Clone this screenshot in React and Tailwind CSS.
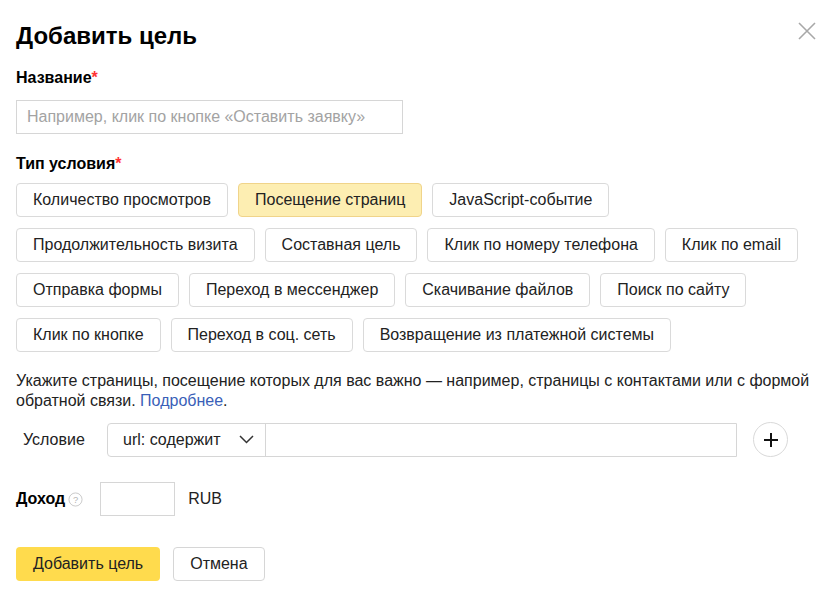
const rows = [
  ["Количество просмотров", "Посещение страниц", "JavaScript-событие"],
  ["Продолжительность визита", "Составная цель", "Клик по номеру телефона", "Клик по email"],
  ["Отправка формы", "Переход в мессенджер", "Скачивание файлов", "Поиск по сайту"],
  ["Клик по кнопке", "Переход в соц. сеть", "Возвращение из платежной системы"],
];

const Chip = ({ label, active }) => (
  <button
    className={
      active
        ? "h-[34px] px-[16px] rounded-[4px] border border-[#f0d48a] bg-[#fdeeb2] text-[16px] text-[#222]"
        : "h-[34px] px-[16px] rounded-[4px] border border-[#dadada] bg-white text-[16px] text-[#222]"
    }
  >
    {label}
  </button>
);

export default function App() {
  return (
    <div
      className="relative w-[840px] h-[592px] bg-white text-[#000] px-4 pt-[21px]"
      style={{ fontFamily: '"Liberation Sans", Arial, sans-serif' }}
    >
      <button className="absolute right-[24px] top-[22px] text-[#a8a8a8]">
        <svg width="18" height="18" viewBox="0 0 18 18" fill="none" stroke="currentColor" strokeWidth="1.6">
          <path d="M1 1L17 17M17 1L1 17" />
        </svg>
      </button>

      <h1 className="text-[24px] font-bold leading-[30px]">Добавить цель</h1>

      <div className="mt-[17px] text-[16px] font-bold leading-[20px]">
        Название<span className="text-[#f33]">*</span>
      </div>
      <input
        className="mt-[12px] block w-[387px] h-[34px] border border-[#d6d6d6] px-[10px] text-[16px] outline-none placeholder:text-[#a3a3a3]"
        placeholder="Например, клик по кнопке «Оставить заявку»"
      />

      <div className="mt-[20px] text-[16px] font-bold leading-[20px]">
        Тип условия<span className="text-[#f33]">*</span>
      </div>
      <div className="mt-[9px] flex flex-col gap-[11px]">
        {rows.map((row, i) => (
          <div key={i} className="flex gap-[10px]">
            {row.map((label) => (
              <Chip key={label} label={label} active={label === "Посещение страниц"} />
            ))}
          </div>
        ))}
      </div>

      <p className="mt-[19px] text-[16px] leading-[20px] text-[#222]">
        Укажите страницы, посещение которых для вас важно — например, страницы с контактами или с формой
        обратной связи. <a className="text-[#3a5fb8]">Подробнее</a>.
      </p>

      <div className="mt-[11px] flex items-center">
        <div className="w-[91px] pl-[7px] text-[16px] text-[#222]">Условие</div>
        <div className="flex h-[34px] w-[630px] border border-[#d6d6d6] rounded-l-[4px]">
          <div className="w-[158px] flex items-center justify-between pl-[15px] pr-[11px] border-r border-[#d6d6d6] text-[16px] text-[#222]">
            <span>url: содержит</span>
            <svg width="15" height="9" viewBox="0 0 15 9" fill="none" stroke="#333" strokeWidth="1.5">
              <path d="M1 1L7.5 7.5L14 1" />
            </svg>
          </div>
          <input className="flex-1 outline-none px-2 text-[16px]" />
        </div>
        <button className="ml-[16px] w-[35px] h-[35px] rounded-full border border-[#d9d9d9] flex items-center justify-center">
          <svg width="16" height="16" viewBox="0 0 16 16" fill="none" stroke="#111" strokeWidth="2">
            <path d="M8 1V15M1 8H15" />
          </svg>
        </button>
      </div>

      <div className="mt-[25px] flex items-center">
        <span className="text-[16px] font-bold">Доход</span>
        <svg className="ml-[3px]" width="15" height="15" viewBox="0 0 16 16" fill="none">
          <circle cx="8" cy="8" r="7" stroke="#c8c8c8" strokeWidth="1" />
          <text x="8" y="11.5" textAnchor="middle" fontSize="10" fill="#b5b5b5" fontFamily="Liberation Sans, Arial, sans-serif">?</text>
        </svg>
        <input className="ml-[17px] w-[75px] h-[34px] border border-[#d6d6d6] outline-none px-2 text-[16px]" />
        <span className="ml-[13px] text-[16px] text-[#222]">RUB</span>
      </div>

      <div className="mt-[31px] flex gap-[13px]">
        <button className="h-[34px] px-[17px] rounded-[4px] bg-[#ffdb4d] text-[16px] text-[#222]">
          Добавить цель
        </button>
        <button className="h-[34px] px-[16px] rounded-[4px] border border-[#d6d6d6] bg-white text-[16px] text-[#222]">
          Отмена
        </button>
      </div>
    </div>
  );
}
